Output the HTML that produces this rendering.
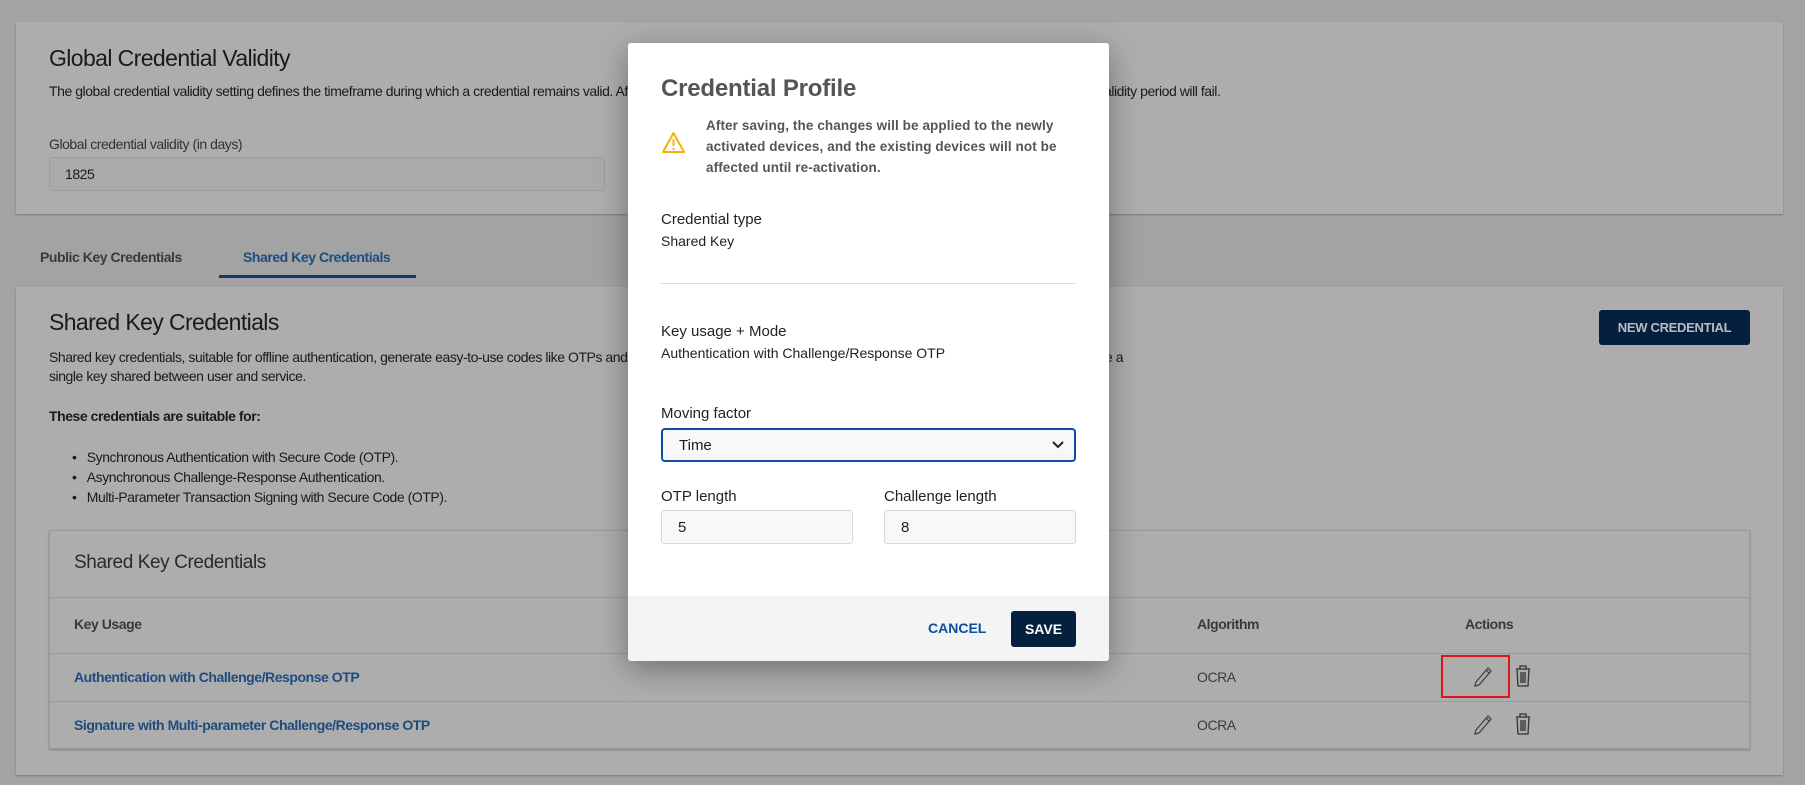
<!DOCTYPE html>
<html><head><meta charset="utf-8"><style>
*{box-sizing:border-box;margin:0;padding:0}
body{width:1805px;height:785px;background:#a3a3a3;position:relative;overflow:hidden;font-family:"Liberation Sans",Arial,sans-serif;color:#1c1c1c}
.a{position:absolute;white-space:nowrap}
.card{position:absolute;background:#adadad;box-shadow:0 1px 2px rgba(0,0,0,.25)}
.bg{font-size:14px;letter-spacing:-0.45px;color:#1a1a1a}
.h{font-size:23px;letter-spacing:-0.6px;color:#1a1a1a}
.link{color:#1d4c80;font-weight:bold;font-size:14px;letter-spacing:-0.45px}
.line{position:absolute;height:1px;background:#9a9a9a}
.m{position:absolute;left:628px;top:43px;width:481px;height:618px;background:#fff;border-radius:3px;box-shadow:0 8px 30px rgba(0,0,0,.35);overflow:hidden}
.m .a{color:#222}
.lab{font-size:15px;color:#222}
.val{font-size:14px;color:#444}
.inp{position:absolute;border:1px solid #d8d8d8;border-radius:3px;background:#f8f8f8;font-size:15px;padding-left:16px;display:flex;align-items:center}
</style></head><body>

<div class="card" style="left:16px;top:22px;width:1767px;height:192px"></div>
<div class="a h" style="left:49px;top:45px">Global Credential Validity</div>
<div class="a bg" style="left:49px;top:83px">The global credential validity setting defines the timeframe during which a credential remains valid. After this period, authentication attempts using credentials that have exceeded their validity period will fail.</div>
<div class="a bg" style="left:49px;top:136px;color:#333">Global credential validity (in days)</div>
<div class="a" style="left:49px;top:157px;width:556px;height:34px;border:1px solid #9c9c9c;border-radius:3px;background:#aaaaaa"></div>
<div class="a bg" style="left:65px;top:166px">1825</div>

<div class="a" style="left:40px;top:249px;font-size:14px;font-weight:bold;color:#3a3a3a;letter-spacing:-0.45px">Public Key Credentials</div>
<div class="a" style="left:243px;top:249px;font-size:14px;font-weight:bold;color:#1d4c80;letter-spacing:-0.45px">Shared Key Credentials</div>
<div class="a" style="left:219px;top:275px;width:197px;height:3px;background:#0f3a6b"></div>

<div class="card" style="left:16px;top:287px;width:1767px;height:488px"></div>
<div class="a h" style="left:49px;top:309px">Shared Key Credentials</div>
<div class="a bg" style="left:49px;top:349px">Shared key credentials, suitable for offline authentication, generate easy-to-use codes like OTPs and support challenge-response and transaction signing. These credentials typically use a</div>
<div class="a bg" style="left:49px;top:368px">single key shared between user and service.</div>
<div class="a bg" style="left:49px;top:408px;font-weight:bold">These credentials are suitable for:</div>
<div class="a bg" style="left:72px;top:449px">•&nbsp;&nbsp;&nbsp;Synchronous Authentication with Secure Code (OTP).</div>
<div class="a bg" style="left:72px;top:469px">•&nbsp;&nbsp;&nbsp;Asynchronous Challenge-Response Authentication.</div>
<div class="a bg" style="left:72px;top:489px">•&nbsp;&nbsp;&nbsp;Multi-Parameter Transaction Signing with Secure Code (OTP).</div>

<div class="a" style="left:1599px;top:310px;width:151px;height:35px;background:#05203f;border-radius:3px;color:#b8bcc2;font-size:13px;font-weight:bold;letter-spacing:-0.3px;display:flex;align-items:center;justify-content:center">NEW CREDENTIAL</div>

<div class="a" style="left:49px;top:530px;width:1701px;height:219px;border:1px solid #9a9a9a;background:#adadad;box-shadow:0 1px 2px rgba(0,0,0,.25)"></div>
<div class="a" style="left:74px;top:552px;font-size:19px;color:#2a2a2a;letter-spacing:-0.4px">Shared Key Credentials</div>
<div class="line" style="left:49px;top:597px;width:1701px"></div>
<div class="a bg" style="left:74px;top:616px;font-weight:bold;color:#3a3a3a">Key Usage</div>
<div class="a bg" style="left:1197px;top:616px;font-weight:bold;color:#3a3a3a">Algorithm</div>
<div class="a bg" style="left:1465px;top:616px;font-weight:bold;color:#3a3a3a">Actions</div>
<div class="line" style="left:49px;top:653px;width:1701px"></div>
<div class="a link" style="left:74px;top:669px">Authentication with Challenge/Response OTP</div>
<div class="a bg" style="left:1197px;top:669px;color:#3a3a3a">OCRA</div>
<div class="line" style="left:49px;top:701px;width:1701px"></div>
<div class="a link" style="left:74px;top:717px">Signature with Multi-parameter Challenge/Response OTP</div>
<div class="a bg" style="left:1197px;top:717px;color:#3a3a3a">OCRA</div>

<div class="a" style="left:1441px;top:655px;width:69px;height:43px;border:2px solid #e0151b"></div>
<svg class="a" style="left:1473px;top:666px" width="20" height="22" viewBox="0 0 20 22"><path d="M15 2 L18 5 L6 19 L2 20 L3 16 Z M13 4 L16 7" fill="none" stroke="#444" stroke-width="1.3"/></svg>
<svg class="a" style="left:1514px;top:664px" width="18" height="24" viewBox="0 0 18 24"><path d="M2 5 H16 M6 5 V2 H12 V5 M3 5 L4 22 H14 L15 5 M7 8 V19 M9 8 V19 M11 8 V19" fill="none" stroke="#333" stroke-width="1.3"/></svg>
<svg class="a" style="left:1473px;top:714px" width="20" height="22" viewBox="0 0 20 22"><path d="M15 2 L18 5 L6 19 L2 20 L3 16 Z M13 4 L16 7" fill="none" stroke="#444" stroke-width="1.3"/></svg>
<svg class="a" style="left:1514px;top:712px" width="18" height="24" viewBox="0 0 18 24"><path d="M2 5 H16 M6 5 V2 H12 V5 M3 5 L4 22 H14 L15 5 M7 8 V19 M9 8 V19 M11 8 V19" fill="none" stroke="#333" stroke-width="1.3"/></svg>

<div class="m">
  <div class="a" style="left:33px;top:32px;font-size:24px;font-weight:bold;color:#555;letter-spacing:-0.2px">Credential Profile</div>
  <svg class="a" style="left:33px;top:88px" width="25" height="23" viewBox="0 0 25 23"><path d="M12.5 2 L23 21 H2 Z" fill="none" stroke="#f2b400" stroke-width="2" stroke-linejoin="round"/><path d="M12.5 8 V15" stroke="#f2b400" stroke-width="2"/><circle cx="12.5" cy="18" r="1.1" fill="#f2b400"/></svg>
  <div class="a" style="left:78px;top:72px;font-size:13.5px;color:#555;line-height:21px;font-weight:bold;white-space:normal;width:360px;letter-spacing:0.1px">After saving, the changes will be applied to the newly activated devices, and the existing devices will not be affected until re-activation.</div>
  <div class="a lab" style="left:33px;top:168px">Credential type</div>
  <div class="a val" style="left:33px;top:190px">Shared Key</div>
  <div class="a" style="left:33px;top:240px;width:415px;height:1px;background:#ddd"></div>
  <div class="a lab" style="left:33px;top:280px">Key usage + Mode</div>
  <div class="a val" style="left:33px;top:302px">Authentication with Challenge/Response OTP</div>
  <div class="a lab" style="left:33px;top:362px">Moving factor</div>
  <div class="inp" style="left:33px;top:385px;width:415px;height:34px;border:2px solid #0b4ea2;border-radius:4px">Time</div>
  <svg class="a" style="left:423px;top:397px" width="14" height="10" viewBox="0 0 14 10"><path d="M2 2 L7 7 L12 2" fill="none" stroke="#222" stroke-width="2"/></svg>
  <div class="a lab" style="left:33px;top:445px">OTP length</div>
  <div class="a lab" style="left:256px;top:445px">Challenge length</div>
  <div class="inp" style="left:33px;top:467px;width:192px;height:34px">5</div>
  <div class="inp" style="left:256px;top:467px;width:192px;height:34px">8</div>
  <div class="a" style="left:0;top:553px;width:481px;height:65px;background:#f4f4f4"></div>
  <div class="a" style="left:300px;top:577px;font-size:14px;font-weight:bold;color:#0b4ea2">CANCEL</div>
  <div class="a" style="left:383px;top:568px;width:65px;height:36px;background:#05203f;border-radius:3px;color:#fff;font-size:14px;font-weight:bold;display:flex;align-items:center;justify-content:center">SAVE</div>
</div>
</body></html>
